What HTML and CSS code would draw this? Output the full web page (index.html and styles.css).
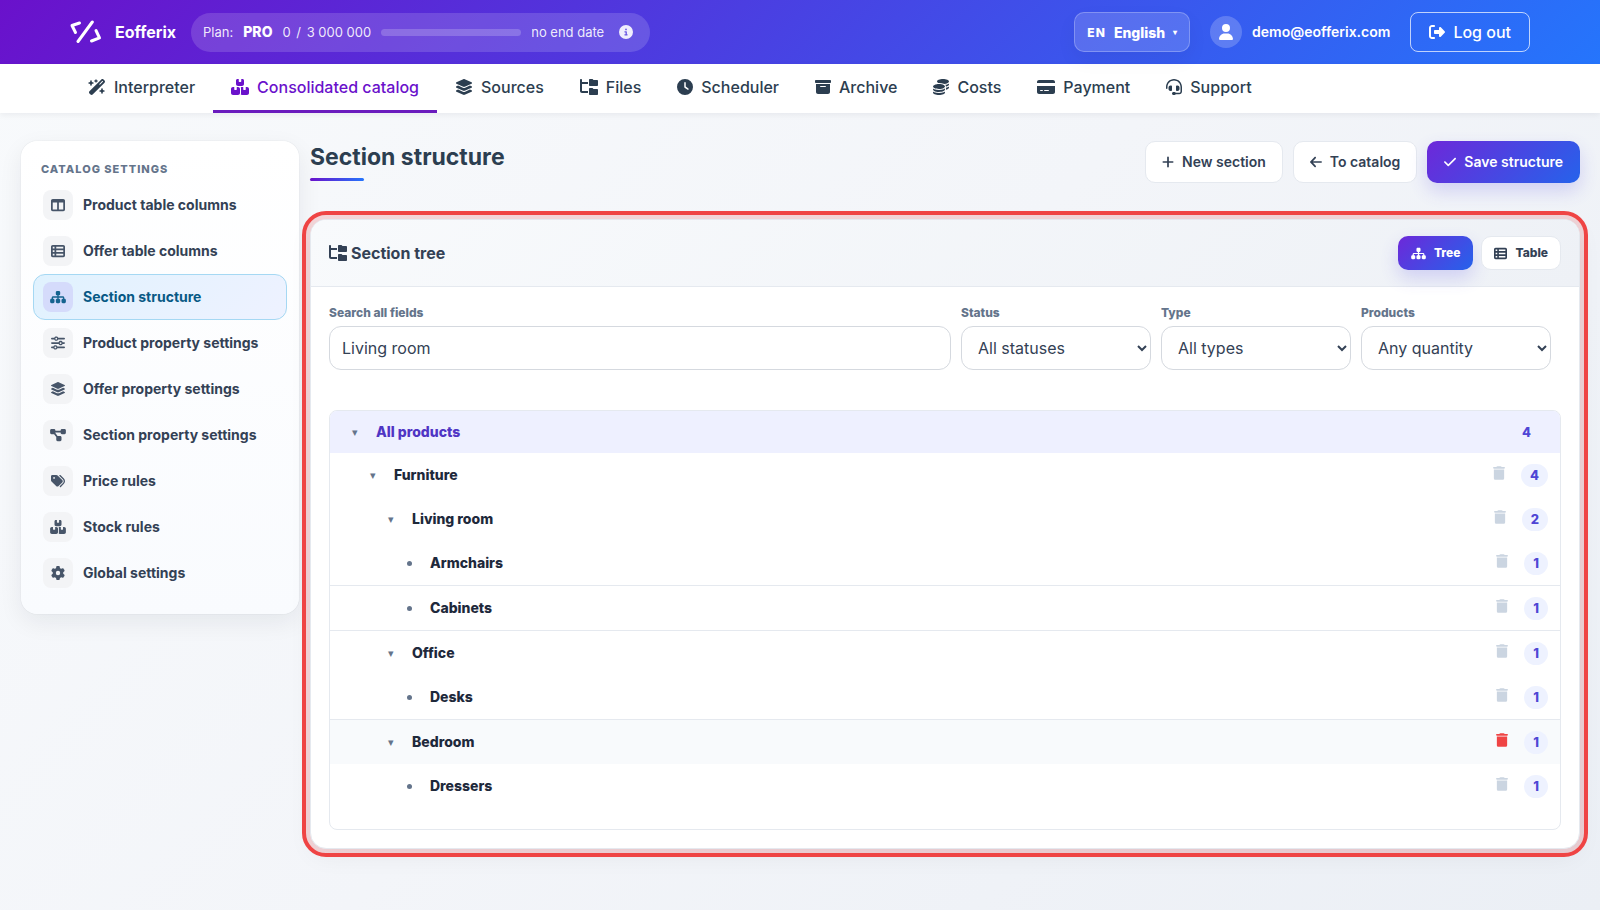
FILE: index.html
```html
<!DOCTYPE html>
<html lang="en">
<head>
<meta charset="utf-8">
<meta name="viewport" content="width=device-width, initial-scale=1">
<title>Section structure – Eofferix</title>
<link rel="stylesheet" href="styles.css">
</head>
<body>
<svg class="sprite" aria-hidden="true">
  <symbol id="i-logo" viewBox="0 0 32 24"><g fill="none" stroke="currentColor" stroke-width="3" stroke-linecap="round" stroke-linejoin="round"><path d="M9.500 3 2 5.500 5.500 12.500"/><path d="M22.300 2 8 21.500"/><path d="M26 10.500 29.500 17.800 21.500 21"/></g></symbol>
  <symbol id="i-user" viewBox="0 0 448 512"><path d="M224 256A128 128 0 1 0 224 0a128 128 0 1 0 0 256zm-45.700 48C79.800 304 0 383.800 0 482.300C0 498.700 13.300 512 29.700 512l388.600 0c16.400 0 29.700-13.300 29.700-29.700C448 383.800 368.200 304 269.700 304l-91.400 0z"/></symbol>
  <symbol id="i-layers" viewBox="0 0 576 512"><path d="M264.500 5.200c14.900-6.900 32.100-6.900 47 0l218.600 101c8.500 3.900 13.900 12.400 13.900 21.800s-5.400 17.900-13.900 21.800l-218.600 101c-14.900 6.900-32.100 6.900-47 0L45.900 149.800C37.400 145.800 32 137.300 32 128s5.400-17.900 13.900-21.800L264.500 5.200zM476.900 209.600l53.200 24.600c8.500 3.900 13.900 12.400 13.900 21.800s-5.400 17.900-13.900 21.800l-218.600 101c-14.900 6.900-32.100 6.900-47 0L45.900 277.800C37.400 273.800 32 265.300 32 256s5.400-17.900 13.900-21.800l53.200-24.600 152 70.200c23.400 10.800 50.400 10.800 73.800 0l152-70.200zm-152 198.200l152-70.200 53.200 24.600c8.500 3.900 13.900 12.400 13.900 21.800s-5.400 17.900-13.900 21.800l-218.600 101c-14.900 6.900-32.100 6.900-47 0L45.900 405.800C37.400 401.800 32 393.300 32 384s5.400-17.900 13.900-21.800l53.200-24.600 152 70.200c23.400 10.800 50.400 10.800 73.800 0z"/></symbol>
  <symbol id="i-boxes" viewBox="0 0 576 512"><path d="M248 0H208c-26.500 0-48 21.500-48 48V160c0 35.300 28.700 64 64 64H352c35.300 0 64-28.700 64-64V48c0-26.500-21.500-48-48-48H328V80c0 8.800-7.200 16-16 16H264c-8.800 0-16-7.200-16-16V0zM64 256c-35.300 0-64 28.700-64 64V448c0 35.300 28.700 64 64 64H224c35.300 0 64-28.700 64-64V320c0-35.300-28.700-64-64-64H184v80c0 8.800-7.200 16-16 16H120c-8.800 0-16-7.200-16-16V256H64zM352 512H512c35.300 0 64-28.700 64-64V320c0-35.300-28.700-64-64-64H472v80c0 8.800-7.200 16-16 16H408c-8.800 0-16-7.200-16-16V256H352c-15 0-28.800 5.100-39.700 13.800c4.900 10.400 7.700 22 7.700 34.200V464c0 12.200-2.800 23.800-7.700 34.200C323.200 506.900 337 512 352 512z"/></symbol>
  <symbol id="i-foldertree" viewBox="0 0 576 512"><path d="M64 32C64 14.300 49.700 0 32 0S0 14.300 0 32v96V384c0 35.300 28.700 64 64 64H256V384H64V160H256V96H64V32zM288 192c0 17.700 14.300 32 32 32H544c17.700 0 32-14.300 32-32V64c0-17.700-14.300-32-32-32H445.300c-8.500 0-16.600-3.400-22.600-9.400L409.400 9.400c-6-6-14.100-9.400-22.600-9.400H320c-17.700 0-32 14.300-32 32V192zm0 288c0 17.700 14.300 32 32 32H544c17.700 0 32-14.300 32-32V352c0-17.700-14.300-32-32-32H445.300c-8.500 0-16.600-3.400-22.600-9.400l-13.300-13.300c-6-6-14.100-9.400-22.600-9.400H320c-17.700 0-32 14.300-32 32V480z"/></symbol>
  <symbol id="i-clock" viewBox="0 0 512 512"><path d="M256 0a256 256 0 1 1 0 512A256 256 0 1 1 256 0zM232 120V256c0 8 4 15.500 10.700 20l96 64c11 7.400 25.900 4.400 33.300-6.700s4.400-25.900-6.700-33.300L280 243.200V120c0-13.300-10.700-24-24-24s-24 10.700-24 24z"/></symbol>
  <symbol id="i-archive" viewBox="0 0 512 512"><path d="M32 32H480c17.700 0 32 14.300 32 32V96c0 17.700-14.300 32-32 32H32C14.300 128 0 113.700 0 96V64C0 46.300 14.300 32 32 32zm0 128H480V416c0 35.300-28.700 64-64 64H96c-35.300 0-64-28.700-64-64V160zm128 80c0 8.800 7.200 16 16 16H336c8.800 0 16-7.200 16-16s-7.200-16-16-16H176c-8.800 0-16 7.200-16 16z"/></symbol>
  <symbol id="i-coins" viewBox="0 0 512 512"><path d="M512 80c0 18-14.300 34.600-38.400 48c-29.100 16.100-72.500 27.500-122.300 30.900c-3.700-1.800-7.400-3.500-11.300-5C300.600 137.400 248.200 128 192 128c-8.300 0-16.400 .2-24.500 .6l-1.100-.6C142.300 114.600 128 98 128 80c0-44.200 86-80 192-80S512 35.800 512 80zM160.700 161.100c10.200-.7 20.700-1.100 31.300-1.100c62.200 0 117.400 12.300 152.500 31.400C369.300 204.900 384 221.700 384 240c0 4-.7 7.900-2.100 11.700c-4.600 13.200-17 25.300-35 35.500c-.1 .1-.3 .1-.4 .2c-.3 .2-.6 .3-.9 .5c-35 19.400-90.800 32-153.600 32c-59.600 0-112.900-11.300-148.200-29.100c-1.900-.9-3.700-1.900-5.500-2.900C14.300 274.600 0 258 0 240c0-34.800 53.400-64.500 128-75.400c10.500-1.500 21.400-2.700 32.700-3.500zM416 240c0-21.900-10.600-39.900-24.100-53.400c28.300-4.400 54.200-11.400 76.200-20.500c16.300-6.800 31.500-15.200 43.900-25.500V176c0 19.300-16.500 37.100-43.800 50.900c-14.600 7.400-32.400 13.700-52.400 18.500c.1-1.800 .2-3.500 .2-5.300zm-32 96c0 18-14.300 34.600-38.400 48c-1.800 1-3.600 1.900-5.500 2.900C304.900 404.700 251.600 416 192 416c-62.800 0-118.600-12.600-153.600-32C14.300 370.600 0 354 0 336V300.600c12.500 10.300 27.600 18.700 43.900 25.500C83.400 342.600 135.800 352 192 352s108.600-9.400 148.100-25.900c7.800-3.200 15.300-6.900 22.400-10.900c6.100-3.400 11.800-7.200 17.200-11.200c1.500-1.100 2.900-2.300 4.300-3.400V304v5.700V336zm32 0V304 278.100c19-4.200 36.500-9.500 52.100-16c16.300-6.800 31.500-15.200 43.900-25.500V272c0 10.500-5 21-14.900 30.900c-16.300 16.300-45 29.700-81.300 38.400c.1-1.700 .2-3.500 .2-5.300zM192 448c56.200 0 108.600-9.400 148.100-25.900c16.300-6.800 31.500-15.200 43.900-25.500V432c0 44.200-86 80-192 80S0 476.200 0 432V396.600c12.500 10.300 27.600 18.700 43.900 25.500C83.400 438.600 135.800 448 192 448z"/></symbol>
  <symbol id="i-card" viewBox="0 0 576 512"><path d="M64 32C28.700 32 0 60.700 0 96v32H576V96c0-35.300-28.700-64-64-64H64zM576 224H0V416c0 35.300 28.700 64 64 64H512c35.300 0 64-28.700 64-64V224zM112 352h64c8.800 0 16 7.200 16 16s-7.200 16-16 16H112c-8.800 0-16-7.200-16-16s7.200-16 16-16zm112 16c0-8.800 7.200-16 16-16H368c8.800 0 16 7.200 16 16s-7.200 16-16 16H240c-8.800 0-16-7.200-16-16z"/></symbol>
  <symbol id="i-headset" viewBox="0 0 512 512"><path d="M256 48C141.100 48 48 141.100 48 256v40c0 13.300-10.700 24-24 24s-24-10.700-24-24V256C0 114.600 114.600 0 256 0S512 114.600 512 256V400.100c0 48.600-39.400 88-88.100 88L313.600 488c-8.300 14.300-23.800 24-41.600 24H240c-26.500 0-48-21.500-48-48s21.500-48 48-48h32c17.800 0 33.300 9.700 41.600 24l110.400 .1c22.100 0 40-17.900 40-40V256c0-114.900-93.100-208-208-208zM144 208h16c17.700 0 32 14.300 32 32V352c0 17.700-14.300 32-32 32H144c-35.300 0-64-28.700-64-64V272c0-35.300 28.700-64 64-64zm224 0c35.300 0 64 28.700 64 64v48c0 35.300-28.700 64-64 64H352c-17.700 0-32-14.300-32-32V240c0-17.700 14.300-32 32-32h16z"/></symbol>
  <symbol id="i-wand" viewBox="0 0 576 512"><path d="M234.700 42.700L197 56.800c-3 1.100-5 4-5 7.200s2 6.100 5 7.200l37.700 14.100L248.800 123c1.100 3 4 5 7.200 5s6.100-2 7.200-5l14.100-37.700L315 71.200c3-1.100 5-4 5-7.200s-2-6.100-5-7.200L277.300 42.700 263.200 5c-1.100-3-4-5-7.200-5s-6.100 2-7.200 5L234.700 42.700zM46.100 395.400c-18.700 18.700-18.700 49.100 0 67.900l34.600 34.600c18.700 18.700 49.100 18.700 67.900 0L529.900 116.500c18.700-18.700 18.700-49.100 0-67.900L495.300 14.100c-18.700-18.700-49.100-18.700-67.900 0L46.100 395.400zM484.600 82.600l-105 105-23.300-23.300 105-105 23.300 23.300zM7.500 117.200C3 118.900 0 123.200 0 128s3 9.100 7.500 10.800L64 160l21.200 56.500c1.700 4.500 6 7.500 10.800 7.500s9.100-3 10.800-7.500L128 160l56.500-21.200c4.500-1.700 7.500-6 7.500-10.800s-3-9.100-7.500-10.800L128 96 106.800 39.500C105.100 35 100.800 32 96 32s-9.100 3-10.800 7.500L64 96 7.500 117.200zm352 256c-4.500 1.700-7.500 6-7.500 10.800s3 9.100 7.500 10.800L416 416l21.200 56.500c1.700 4.500 6 7.500 10.800 7.500s9.100-3 10.800-7.500L480 416l56.500-21.200c4.500-1.700 7.500-6 7.500-10.800s-3-9.100-7.500-10.800L480 352l-21.200-56.500c-1.700-4.500-6-7.500-10.800-7.500s-9.100 3-10.800 7.500L416 352l-56.500 21.200z"/></symbol>
  <symbol id="i-sitemap" viewBox="0 0 576 512"><path d="M208 80c0-26.500 21.500-48 48-48h64c26.500 0 48 21.500 48 48v64c0 26.500-21.500 48-48 48h-8v40H464c30.900 0 56 25.100 56 56v32h8c26.500 0 48 21.500 48 48v64c0 26.500-21.500 48-48 48H464c-26.500 0-48-21.500-48-48V368c0-26.500 21.500-48 48-48h8V288c0-4.400-3.600-8-8-8H312v40h8c26.500 0 48 21.500 48 48v64c0 26.500-21.500 48-48 48H256c-26.500 0-48-21.500-48-48V368c0-26.500 21.500-48 48-48h8V280H112c-4.400 0-8 3.600-8 8v32h8c26.500 0 48 21.500 48 48v64c0 26.500-21.500 48-48 48H48c-26.500 0-48-21.500-48-48V368c0-26.500 21.500-48 48-48h8V288c0-30.900 25.100-56 56-56H264V192h-8c-26.500 0-48-21.500-48-48V80z"/></symbol>
  <symbol id="i-diagram" viewBox="0 0 576 512"><path d="M0 80C0 53.500 21.500 32 48 32h96c26.500 0 48 21.500 48 48V96H384V80c0-26.500 21.500-48 48-48h96c26.500 0 48 21.500 48 48v96c0 26.500-21.500 48-48 48H432c-26.500 0-48-21.500-48-48V160H192v16c0 1.700-.1 3.400-.3 5L272 288h96c26.500 0 48 21.500 48 48v96c0 26.500-21.500 48-48 48H272c-26.500 0-48-21.500-48-48V336c0-1.700 .1-3.400 .3-5L144 224H48c-26.500 0-48-21.500-48-48V80z"/></symbol>
  <symbol id="i-columns" viewBox="0 0 512 512"><path d="M0 96C0 60.700 28.700 32 64 32H448c35.300 0 64 28.700 64 64V416c0 35.300-28.700 64-64 64H64c-35.300 0-64-28.700-64-64V96zm64 64V416H224V160H64zm384 0H288V416H448V160z"/></symbol>
  <symbol id="i-tablelist" viewBox="0 0 512 512"><path d="M0 96C0 60.700 28.700 32 64 32H448c35.300 0 64 28.700 64 64V416c0 35.300-28.700 64-64 64H64c-35.300 0-64-28.700-64-64V96zm64 0v64h64V96H64zm384 0H192v64H448V96zM64 224v64h64V224H64zm384 0H192v64H448V224zM64 352v64h64V352H64zm384 0H192v64H448V352z"/></symbol>
  <symbol id="i-sliders" viewBox="0 0 512 512"><path d="M0 416c0 17.700 14.300 32 32 32l54.700 0c12.300 28.300 40.500 48 73.300 48s61-19.700 73.300-48L480 448c17.700 0 32-14.300 32-32s-14.300-32-32-32l-246.700 0c-12.300-28.300-40.500-48-73.300-48s-61 19.700-73.300 48L32 384c-17.700 0-32 14.300-32 32zm128 0a32 32 0 1 1 64 0 32 32 0 1 1 -64 0zM320 256a32 32 0 1 1 64 0 32 32 0 1 1 -64 0zm32-80c-32.800 0-61 19.700-73.300 48L32 224c-17.700 0-32 14.300-32 32s14.300 32 32 32l246.700 0c12.300 28.300 40.500 48 73.300 48s61-19.700 73.300-48l54.700 0c17.700 0 32-14.300 32-32s-14.300-32-32-32l-54.700 0c-12.300-28.300-40.500-48-73.300-48zM192 128a32 32 0 1 1 0-64 32 32 0 1 1 0 64zm73.300-64C253 35.700 224.800 16 192 16s-61 19.700-73.300 48L32 64C14.300 64 0 78.300 0 96s14.300 32 32 32l86.700 0c12.300 28.300 40.500 48 73.300 48s61-19.700 73.300-48L480 128c17.700 0 32-14.300 32-32s-14.300-32-32-32L265.300 64z"/></symbol>
  <symbol id="i-tags" viewBox="0 0 512 512"><path d="M345 39.100L472.800 168.400c52.400 53 52.400 138.200 0 191.200L360.800 472.900c-9.300 9.400-24.500 9.500-33.900 .2s-9.500-24.500-.2-33.900L438.600 325.900c33.900-34.300 33.900-89.400 0-123.700L310.900 72.900c-9.300-9.400-9.200-24.600 .2-33.900s24.600-9.200 33.900 .2zM0 229.500V80C0 53.500 21.500 32 48 32H197.500c17 0 33.300 6.700 45.300 18.700l168 168c25 25 25 65.500 0 90.500L277.300 442.700c-25 25-65.500 25-90.500 0l-168-168C6.700 262.700 0 246.500 0 229.500zM144 144a32 32 0 1 0 -64 0 32 32 0 1 0 64 0z"/></symbol>
  <symbol id="i-gear" viewBox="0 0 512 512"><path d="M495.900 166.600c3.200 8.700 .5 18.400-6.400 24.600l-43.300 39.400c1.100 8.300 1.700 16.800 1.700 25.400s-.6 17.100-1.700 25.400l43.300 39.400c6.900 6.200 9.600 15.900 6.400 24.600c-4.400 11.900-9.700 23.300-15.800 34.300l-4.700 8.100c-6.600 11-14 21.400-22.100 31.200c-5.900 7.200-15.700 9.600-24.500 6.800l-55.700-17.700c-13.400 10.300-28.200 18.900-44 25.400l-12.500 57.100c-2 9.100-9 16.300-18.200 17.800c-13.800 2.300-28 3.500-42.500 3.500s-28.700-1.200-42.500-3.500c-9.200-1.500-16.200-8.700-18.200-17.800l-12.500-57.100c-15.800-6.500-30.600-15.100-44-25.400L83.100 425.900c-8.800 2.800-18.600 .3-24.500-6.800c-8.100-9.800-15.500-20.200-22.100-31.200l-4.700-8.100c-6.100-11-11.400-22.400-15.800-34.300c-3.200-8.700-.5-18.400 6.400-24.600l43.300-39.400C64.600 273.100 64 264.600 64 256s.6-17.100 1.700-25.400L22.400 191.200c-6.900-6.200-9.600-15.900-6.400-24.600c4.400-11.900 9.700-23.300 15.800-34.300l4.700-8.100c6.600-11 14-21.400 22.100-31.200c5.900-7.200 15.700-9.600 24.500-6.800l55.700 17.700c13.400-10.300 28.200-18.900 44-25.400l12.500-57.100c2-9.100 9-16.300 18.200-17.800C227.300 1.200 241.500 0 256 0s28.700 1.200 42.500 3.500c9.200 1.500 16.200 8.700 18.200 17.800l12.500 57.100c15.800 6.500 30.600 15.100 44 25.400l55.700-17.700c8.800-2.800 18.600-.3 24.500 6.800c8.100 9.800 15.500 20.200 22.100 31.200l4.700 8.100c6.100 11 11.400 22.400 15.800 34.300zM256 336a80 80 0 1 0 0-160 80 80 0 1 0 0 160z"/></symbol>
  <symbol id="i-plus" viewBox="0 0 448 512"><path d="M256 80c0-17.700-14.300-32-32-32s-32 14.300-32 32V224H48c-17.700 0-32 14.300-32 32s14.300 32 32 32H192V432c0 17.700 14.300 32 32 32s32-14.300 32-32V288H400c17.700 0 32-14.300 32-32s-14.300-32-32-32H256V80z"/></symbol>
  <symbol id="i-left" viewBox="0 0 448 512"><path d="M9.400 233.400c-12.500 12.500-12.500 32.800 0 45.300l160 160c12.500 12.500 32.800 12.500 45.300 0s12.500-32.800 0-45.300L109.200 288 416 288c17.700 0 32-14.300 32-32s-14.300-32-32-32l-306.700 0L214.600 118.600c12.500-12.500 12.500-32.800 0-45.300s-32.800-12.500-45.300 0l-160 160z"/></symbol>
  <symbol id="i-check" viewBox="0 0 448 512"><path d="M438.600 105.400c12.500 12.500 12.500 32.800 0 45.300l-256 256c-12.500 12.500-32.800 12.500-45.300 0l-128-128c-12.500-12.500-12.500-32.800 0-45.300s32.800-12.500 45.300 0L160 338.700 393.400 105.400c12.500-12.500 32.800-12.500 45.300 0z"/></symbol>
  <symbol id="i-logout" viewBox="0 0 512 512"><path d="M377.900 105.900L500.700 228.700c7.200 7.200 11.300 17.100 11.300 27.300s-4.100 20.100-11.300 27.300L377.900 406.100c-6.400 6.400-15 9.900-24 9.900c-18.700 0-33.900-15.200-33.900-33.900l0-62.100-128 0c-17.700 0-32-14.300-32-32l0-64c0-17.700 14.300-32 32-32l128 0 0-62.100c0-18.700 15.200-33.900 33.900-33.900c9 0 17.600 3.600 24 9.900zM160 96L96 96c-17.700 0-32 14.300-32 32l0 256c0 17.700 14.300 32 32 32l64 0c17.700 0 32 14.300 32 32s-14.300 32-32 32l-64 0c-53 0-96-43-96-96L0 128C0 75 43 32 96 32l64 0c17.700 0 32 14.300 32 32s-14.300 32-32 32z"/></symbol>
  <symbol id="i-info" viewBox="0 0 512 512"><path d="M256 512A256 256 0 1 0 256 0a256 256 0 1 0 0 512zM216 336h24V272H216c-13.300 0-24-10.700-24-24s10.700-24 24-24h48c13.300 0 24 10.700 24 24v88h8c13.300 0 24 10.700 24 24s-10.700 24-24 24H216c-13.300 0-24-10.700-24-24s10.700-24 24-24zm40-208a32 32 0 1 1 0 64 32 32 0 1 1 0-64z"/></symbol>
  <symbol id="i-trash" viewBox="0 0 448 512"><path d="M135.200 17.700C140.600 6.800 151.700 0 163.800 0H284.200c12.100 0 23.200 6.800 28.600 17.700L320 32h96c17.700 0 32 14.300 32 32s-14.300 32-32 32H32C14.300 96 0 81.700 0 64S14.300 32 32 32h96l7.200-14.300zM32 128H416V448c0 35.300-28.700 64-64 64H96c-35.300 0-64-28.700-64-64V128z"/></symbol>
</svg>

<header class="topbar">
  <a class="brand" href="#"><svg class="brand-mark"><use href="#i-logo"/></svg><span>Eofferix</span></a>
  <div class="plan">
    <span>Plan:</span>
    <strong class="plan-name">PRO</strong>
    <span class="plan-usage">0 <span>/</span> 3 000 000</span>
    <span class="plan-bar"></span>
    <span>no end date</span>
    <button class="plan-info" type="button" aria-label="Plan details"><svg class="icon icon-14"><use href="#i-info"/></svg></button>
  </div>
  <div class="account">
    <button class="lang" type="button"><span class="lang-code">EN</span><span>English</span><span class="lang-caret">▾</span></button>
    <a class="user" href="#"><span class="avatar"><svg class="icon icon-16"><use href="#i-user"/></svg></span><span>demo@eofferix.com</span></a>
    <button class="logout" type="button"><svg class="icon icon-16"><use href="#i-logout"/></svg><span>Log out</span></button>
  </div>
</header>

<nav class="mainnav" aria-label="Main">
  <a class="nav-link" href="#"><svg class="icon wide-16"><use href="#i-wand"/></svg>Interpreter</a>
  <a class="nav-link is-active" href="#" aria-current="page"><svg class="icon wide-16"><use href="#i-boxes"/></svg>Consolidated catalog</a>
  <a class="nav-link" href="#"><svg class="icon wide-16"><use href="#i-layers"/></svg>Sources</a>
  <a class="nav-link" href="#"><svg class="icon wide-16"><use href="#i-foldertree"/></svg>Files</a>
  <a class="nav-link" href="#"><svg class="icon icon-16"><use href="#i-clock"/></svg>Scheduler</a>
  <a class="nav-link" href="#"><svg class="icon icon-16"><use href="#i-archive"/></svg>Archive</a>
  <a class="nav-link" href="#"><svg class="icon icon-16"><use href="#i-coins"/></svg>Costs</a>
  <a class="nav-link" href="#"><svg class="icon wide-16"><use href="#i-card"/></svg>Payment</a>
  <a class="nav-link" href="#"><svg class="icon icon-16"><use href="#i-headset"/></svg>Support</a>
</nav>

<div class="layout">
  <aside class="sidebar">
    <h2 class="sidebar-title">Catalog settings</h2>
    <nav class="sidebar-nav" aria-label="Catalog settings">
      <a class="side-link" href="#"><span class="side-icon"><svg class="icon icon-14"><use href="#i-columns"/></svg></span>Product table columns</a>
      <a class="side-link" href="#"><span class="side-icon"><svg class="icon icon-14"><use href="#i-tablelist"/></svg></span>Offer table columns</a>
      <a class="side-link is-active" href="#" aria-current="page"><span class="side-icon"><svg class="icon wide-14"><use href="#i-sitemap"/></svg></span>Section structure</a>
      <a class="side-link" href="#"><span class="side-icon"><svg class="icon icon-14"><use href="#i-sliders"/></svg></span>Product property settings</a>
      <a class="side-link" href="#"><span class="side-icon"><svg class="icon wide-14"><use href="#i-layers"/></svg></span>Offer property settings</a>
      <a class="side-link" href="#"><span class="side-icon"><svg class="icon wide-14"><use href="#i-diagram"/></svg></span>Section property settings</a>
      <a class="side-link" href="#"><span class="side-icon"><svg class="icon icon-14"><use href="#i-tags"/></svg></span>Price rules</a>
      <a class="side-link" href="#"><span class="side-icon"><svg class="icon wide-14"><use href="#i-boxes"/></svg></span>Stock rules</a>
      <a class="side-link" href="#"><span class="side-icon"><svg class="icon icon-14"><use href="#i-gear"/></svg></span>Global settings</a>
    </nav>
  </aside>

  <main class="content">
    <div class="page-head">
      <h1 class="page-title">Section structure</h1>
      <div class="actions">
        <button class="btn" type="button"><svg class="icon slim-14"><use href="#i-plus"/></svg>New section</button>
        <a class="btn" href="#"><svg class="icon slim-14"><use href="#i-left"/></svg>To catalog</a>
        <button class="btn btn-primary" type="button"><svg class="icon slim-14"><use href="#i-check"/></svg>Save structure</button>
      </div>
    </div>

    <section class="panel">
      <div class="panel-head">
        <h2 class="panel-title"><svg class="icon wide-16"><use href="#i-foldertree"/></svg>Section tree</h2>
        <div class="view-switch">
          <button class="btn btn-small btn-primary" type="button" aria-pressed="true"><svg class="icon wide-13"><use href="#i-sitemap"/></svg>Tree</button>
          <button class="btn btn-small" type="button" aria-pressed="false"><svg class="icon icon-13"><use href="#i-tablelist"/></svg>Table</button>
        </div>
      </div>
      <div class="panel-body">
        <form class="filters">
          <div class="field"><label for="q">Search all fields</label><input id="q" class="control" type="text" value="Living room"></div>
          <div class="field"><label for="status">Status</label><select id="status" class="control"><option>All statuses</option></select></div>
          <div class="field"><label for="type">Type</label><select id="type" class="control"><option>All types</option></select></div>
          <div class="field"><label for="products">Products</label><select id="products" class="control"><option>Any quantity</option></select></div>
        </form>

        <div class="tree">
          <div class="row row-root"><button class="toggle" type="button" aria-label="Collapse">▾</button><span class="name">All products</span><span class="count">4</span></div>
          <div class="row level-1"><button class="toggle" type="button" aria-label="Collapse">▾</button><span class="name">Furniture</span><button class="trash" type="button" aria-label="Delete Furniture"><svg class="icon slim-14"><use href="#i-trash"/></svg></button><span class="count">4</span></div>
          <div class="row level-2"><button class="toggle" type="button" aria-label="Collapse">▾</button><span class="name">Living room</span><button class="trash" type="button" aria-label="Delete Living room"><svg class="icon slim-14"><use href="#i-trash"/></svg></button><span class="count">2</span></div>
          <div class="row level-3 is-ruled"><span class="toggle leaf"></span><span class="name">Armchairs</span><button class="trash" type="button" aria-label="Delete Armchairs"><svg class="icon slim-14"><use href="#i-trash"/></svg></button><span class="count">1</span></div>
          <div class="row level-3 is-ruled"><span class="toggle leaf"></span><span class="name">Cabinets</span><button class="trash" type="button" aria-label="Delete Cabinets"><svg class="icon slim-14"><use href="#i-trash"/></svg></button><span class="count">1</span></div>
          <div class="row level-2"><button class="toggle" type="button" aria-label="Collapse">▾</button><span class="name">Office</span><button class="trash" type="button" aria-label="Delete Office"><svg class="icon slim-14"><use href="#i-trash"/></svg></button><span class="count">1</span></div>
          <div class="row level-3 is-ruled"><span class="toggle leaf"></span><span class="name">Desks</span><button class="trash" type="button" aria-label="Delete Desks"><svg class="icon slim-14"><use href="#i-trash"/></svg></button><span class="count">1</span></div>
          <div class="row level-2 is-hovered"><button class="toggle" type="button" aria-label="Collapse">▾</button><span class="name">Bedroom</span><button class="trash" type="button" aria-label="Delete Bedroom"><svg class="icon slim-14"><use href="#i-trash"/></svg></button><span class="count">1</span></div>
          <div class="row level-3"><span class="toggle leaf"></span><span class="name">Dressers</span><button class="trash" type="button" aria-label="Delete Dressers"><svg class="icon slim-14"><use href="#i-trash"/></svg></button><span class="count">1</span></div>
        </div>
      </div>
    </section>
  </main>
</div>
</body>
</html>
```

FILE: styles.css
```css
*, *::before, *::after { box-sizing: border-box; }

:root {
  --ink: #2c3e50;
  --text: #334155;
  --muted: #64748b;
  --line: #e5e9ef;
  --indigo: #4f46d5;
  --brand-gradient: linear-gradient(135deg, #6d28d9, #2563eb);
}

body {
  margin: 0;
  min-height: 100vh;
  font-family: Inter, "Liberation Sans", sans-serif;
  font-size: 16px;
  line-height: 24px;
  color: var(--ink);
  background: linear-gradient(135deg, #f8fafc 0%, #f3f5f9 50%, #ebeff5 100%);
}

h1, h2 { margin: 0; }
a { color: inherit; text-decoration: none; }
button { font-family: inherit; color: inherit; cursor: pointer; }

.sprite { position: absolute; width: 0; height: 0; }
.icon { flex: none; display: block; fill: currentColor; }
.icon-16 { width: 16px; height: 16px; }
.wide-16 { width: 18px; height: 16px; }
.icon-14 { width: 14px; height: 14px; }
.wide-14 { width: 16px; height: 14px; }
.slim-14 { width: 12px; height: 14px; }
.icon-13 { width: 13px; height: 13px; }
.wide-13 { width: 15px; height: 13px; }

/* Top bar */
.topbar {
  display: flex;
  align-items: center;
  height: 64px;
  padding: 0 70px;
  color: #fff;
  background: linear-gradient(135deg, #6a11cb 0%, #2575fc 100%);
}
.brand { display: flex; align-items: center; gap: 13px; font-weight: 700; }
.brand-mark { width: 32px; height: 24px; }
.plan {
  display: flex;
  align-items: center;
  gap: 10px;
  height: 39px;
  margin-left: 15px;
  padding: 0 12px;
  border-radius: 20px;
  background: rgba(255, 255, 255, .15);
  font-size: 13px;
  color: rgba(255, 255, 255, .9);
}
.plan-name { font-size: 14px; font-weight: 800; color: #fff; }
.plan-usage span { margin: 0 2px; }
.plan-bar { width: 140px; height: 7px; border-radius: 4px; background: rgba(255, 255, 255, .2); }
.plan-info { display: grid; padding: 5px; border: 0; background: none; }
.account { display: flex; align-items: center; gap: 20px; margin-left: auto; }
.lang {
  display: flex;
  align-items: center;
  gap: 8px;
  height: 40px;
  padding: 0 12px;
  border: 1px solid rgba(255, 255, 255, .25);
  border-radius: 10px;
  background: rgba(255, 255, 255, .15);
  box-shadow: 0 8px 20px rgba(15, 23, 42, .05);
  font-size: 14px;
  font-weight: 800;
}
.lang-code { font-size: 12px; letter-spacing: 1px; }
.lang-caret { font-size: 8px; }
.user { display: flex; align-items: center; gap: 10px; font-size: 14px; font-weight: 600; }
.avatar {
  display: grid;
  place-items: center;
  width: 32px;
  height: 32px;
  border-radius: 50%;
  background: rgba(255, 255, 255, .2);
}
.logout {
  display: flex;
  align-items: center;
  gap: 8px;
  height: 40px;
  padding: 0 18px;
  border: 1px solid rgba(255, 255, 255, .7);
  border-radius: 8px;
  background: transparent;
  font-size: 16px;
  font-weight: 500;
}

/* Main navigation */
.mainnav {
  display: flex;
  height: 49px;
  padding: 0 70px;
  background: #fff;
  box-shadow: 0 2px 6px rgba(15, 23, 42, .06);
}
.nav-link {
  display: flex;
  align-items: center;
  gap: 8px;
  padding: 0 18px;
  border-bottom: 3px solid transparent;
  font-weight: 500;
}
.nav-link.is-active { color: #6a11cb; border-bottom-color: #6a1bbd; }

/* Page layout */
.layout {
  display: grid;
  grid-template-columns: 278px minmax(0, 1fr);
  align-items: start;
  gap: 11px;
  padding: 28px 20px 60px 21px;
}

.sidebar {
  padding: 19px 12px 18px;
  border-radius: 16px;
  background: linear-gradient(180deg, #fff, #f9fbfe);
  box-shadow: 0 8px 24px rgba(15, 23, 42, .07), 0 0 1px rgba(15, 23, 42, .2);
}
.sidebar-title {
  padding: 0 8px;
  margin-bottom: 4px;
  font-size: 11px;
  line-height: 18px;
  font-weight: 800;
  letter-spacing: 1px;
  text-transform: uppercase;
  color: var(--muted);
}
.side-link {
  display: flex;
  align-items: center;
  gap: 10px;
  height: 46px;
  padding: 0 9px;
  border: 1px solid transparent;
  border-radius: 12px;
  font-size: 14px;
  font-weight: 700;
  color: var(--text);
}
.side-icon {
  display: grid;
  place-items: center;
  width: 30px;
  height: 30px;
  border-radius: 8px;
  background: #f3f4f6;
  color: #475569;
}
.side-link.is-active {
  border-color: #a5d8f3;
  background: linear-gradient(135deg, #e0f2fe, #eef2ff);
  color: #075985;
}
.side-link.is-active .side-icon { background: #d5dbfb; color: #15638f; }

/* Page heading */
.page-head { display: flex; align-items: flex-start; justify-content: space-between; margin-bottom: 36px; }
.page-title { display: grid; gap: 5px; font-size: 23px; line-height: 32px; }
.page-title::after { content: ""; width: 54px; height: 3px; border-radius: 2px; background: linear-gradient(90deg, #6a11cb, #2575fc); }
.actions { display: flex; gap: 10px; }
.btn {
  display: flex;
  align-items: center;
  gap: 8px;
  height: 42px;
  padding: 0 16px;
  border: 1px solid var(--line);
  border-radius: 10px;
  background: #fff;
  font-size: 14px;
  line-height: 20px;
  font-weight: 600;
  color: var(--text);
}
.btn-primary {
  border-color: transparent;
  background: var(--brand-gradient) border-box;
  box-shadow: 0 8px 18px rgba(79, 70, 229, .2);
  color: #fff;
}
.btn-small { height: 34px; padding: 0 12px; font-size: 12px; font-weight: 800; }

/* Section tree panel */
.panel {
  border: 1px solid var(--line);
  border-radius: 16px;
  background: #fff;
  outline: 4px solid #ef4444;
  outline-offset: 4px;
  box-shadow: 0 0 0 5px rgba(239, 68, 68, .18), 0 8px 24px rgba(15, 23, 42, .05);
}
.panel-head {
  display: flex;
  align-items: center;
  justify-content: space-between;
  padding: 16px 18px;
  border-bottom: 1px solid var(--line);
  border-radius: 15px 15px 0 0;
  background: linear-gradient(135deg, #f8fafc, #eef1f6);
}
.panel-title { display: flex; align-items: center; gap: 4px; font-size: 16px; color: var(--text); }
.view-switch { display: flex; gap: 8px; }
.panel-body { padding: 16px 18px 18px; }

.filters {
  display: grid;
  grid-template-columns: minmax(0, 1fr) repeat(3, 190px);
  gap: 10px;
  margin: 0 10px 40px 0;
}
.field { display: grid; gap: 3px; }
.field label { font-size: 12px; line-height: 20px; font-weight: 800; color: var(--muted); }
.control {
  width: 100%;
  height: 44px;
  padding: 0 12px;
  border: 1px solid #d5d9df;
  border-radius: 12px;
  background: #fff;
  font-family: inherit;
  font-size: 16px;
  color: var(--text);
}

.tree {
  padding-bottom: 21px;
  border: 1px solid var(--line);
  border-radius: 8px;
  overflow: hidden;
}
.row {
  display: flex;
  align-items: center;
  min-height: 44px;
  padding-right: 12px;
  font-size: 14px;
  color: #1e293b;
}
.row-root { min-height: 42px; padding: 0 20px 0 14px; background: #eef0ff; }
.level-1 { padding-left: 32px; }
.level-2 { padding-left: 50px; }
.level-3 { padding-left: 68px; }
.is-ruled { min-height: 45px; border-bottom: 1px solid var(--line); }
.is-hovered { background: #f8fafc; }
.toggle {
  width: 22px;
  padding: 0;
  border: 0;
  background: none;
  font-size: 11px;
  line-height: 20px;
  text-align: center;
  color: var(--muted);
}
.leaf { display: grid; place-items: center; }
.leaf::before { content: ""; width: 5px; height: 5px; border-radius: 50%; background: var(--muted); }
.name { flex: 1; padding-left: 10px; font-weight: 800; }
.row-root .name { color: #4f35c4; }
.trash { display: grid; margin-right: 6px; padding: 4px 10px 8px; border: 0; background: none; color: #cbd5e1; }
.is-hovered .trash { color: #ef4444; }
.count {
  padding: 2px 9px;
  border-radius: 12px;
  background: #eef2ff;
  font-size: 13px;
  line-height: 19px;
  font-weight: 800;
  color: var(--indigo);
}
.row-root .count { background: none; }
```
